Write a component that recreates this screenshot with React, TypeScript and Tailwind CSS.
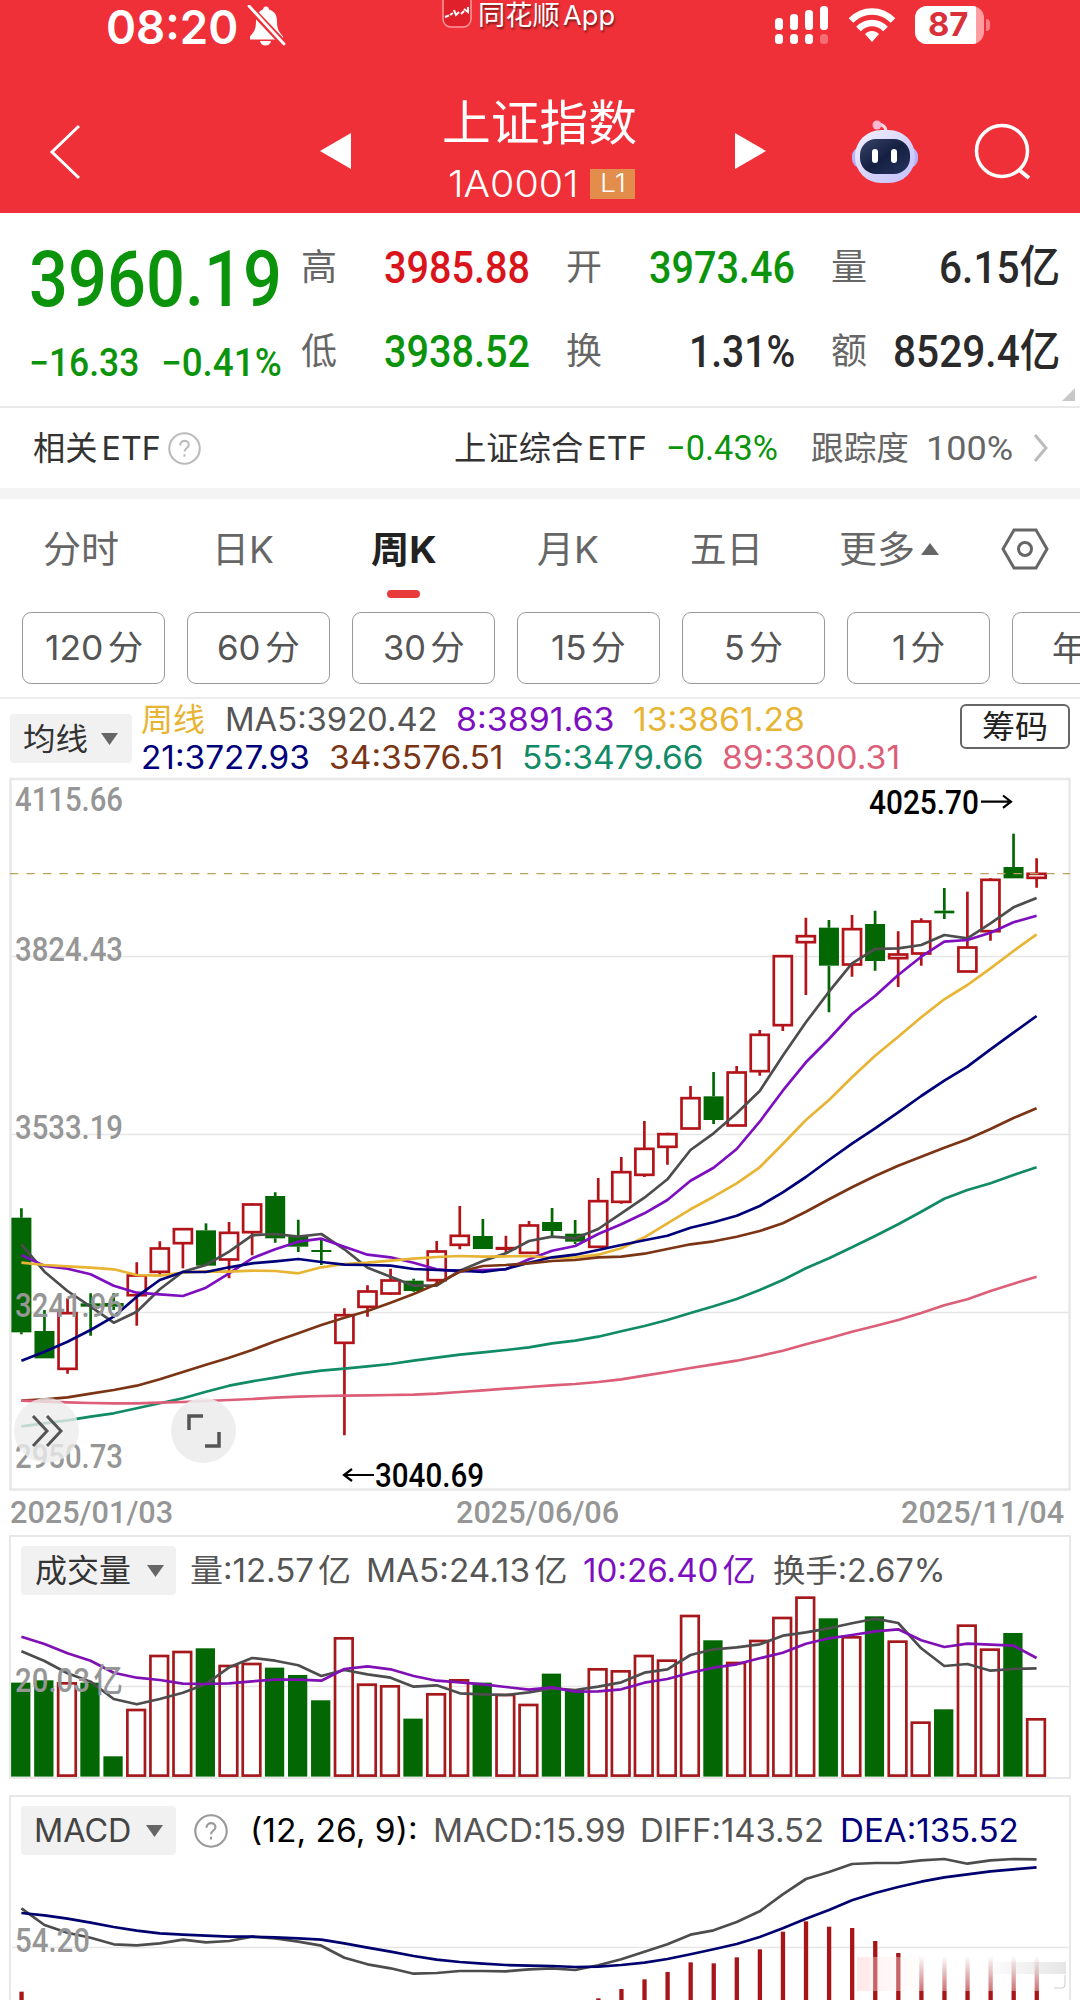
import { useLayoutEffect, useRef, type ReactNode } from 'react';
import clsx from 'clsx';

const STEP = 23.073;
const FIRST_X = 21.4;
const xAt = (i: number) => FIRST_X + i * STEP;

// Chart values are stored in thirds of a pixel
const toPoints = (values: number[]) =>
  values.map((v, i) => `${xAt(i).toFixed(1)},${(v / 3).toFixed(1)}`).join(' ');

type Candle = [up: 0 | 1, top: number, bottom: number, high: number, low: number];

const CANDLES: Candle[] = [
  [0, 1343, 1687, 1315, 1693],
  [0, 1683, 1765, 1620, 1765],
  [1, 1628, 1798, 1585, 1811],
  [0, 1600, 1610, 1570, 1697],
  [0, 1599, 1610, 1570, 1620],
  [1, 1515, 1577, 1477, 1667],
  [1, 1434, 1507, 1414, 1520],
  [1, 1376, 1421, 1376, 1495],
  [0, 1381, 1487, 1360, 1487],
  [1, 1387, 1470, 1356, 1525],
  [1, 1302, 1388, 1300, 1456],
  [0, 1278, 1405, 1267, 1418],
  [0, 1400, 1430, 1349, 1446],
  [0, 1440, 1446, 1405, 1485],
  [1, 1634, 1720, 1615, 1996],
  [1, 1563, 1612, 1546, 1640],
  [1, 1530, 1572, 1496, 1575],
  [0, 1532, 1563, 1526, 1565],
  [1, 1443, 1532, 1413, 1545],
  [1, 1396, 1426, 1308, 1438],
  [0, 1398, 1437, 1347, 1437],
  [1, 1433, 1436, 1397, 1450],
  [1, 1365, 1450, 1353, 1452],
  [0, 1356, 1383, 1314, 1400],
  [0, 1391, 1415, 1350, 1422],
  [1, 1292, 1432, 1224, 1432],
  [1, 1205, 1297, 1161, 1301],
  [1, 1135, 1216, 1053, 1221],
  [1, 1091, 1132, 1088, 1184],
  [1, 983, 1077, 948, 1077],
  [0, 979, 1050, 906, 1062],
  [1, 906, 1068, 888, 1068],
  [1, 793, 905, 780, 917],
  [1, 557, 767, 555, 783],
  [1, 497, 518, 443, 675],
  [0, 473, 587, 450, 727],
  [1, 476, 585, 435, 620],
  [0, 462, 573, 422, 602],
  [1, 552, 566, 484, 651],
  [1, 453, 552, 445, 587],
  [0, 422, 430, 354, 447],
  [1, 531, 606, 365, 606],
  [1, 328, 485, 325, 512],
  [0, 291, 325, 191, 325],
  [1, 310, 325, 265, 353],
];

const MA_LINES = [
  {
    color: '#4d4d4d',
    values: [1423, 1505, 1563, 1610, 1658, 1625, 1558, 1505, 1485, 1445, 1396, 1392, 1400, 1392, 1438, 1493, 1520, 1547, 1547, 1502, 1473, 1450, 1413, 1400, 1405, 1377, 1330, 1283, 1228, 1140, 1090, 1030, 963, 857, 757, 665, 580, 537, 535, 525, 495, 505, 460, 412, 384],
  },
  {
    color: '#7d0fc0',
    values: [1455, 1488, 1496, 1513, 1547, 1568, 1573, 1578, 1553, 1510, 1465, 1438, 1415, 1406, 1430, 1454, 1462, 1478, 1498, 1504, 1500, 1498, 1468, 1442, 1428, 1392, 1363, 1330, 1290, 1232, 1193, 1137, 1055, 962, 877, 807, 732, 678, 615, 560, 515, 510, 488, 457, 437],
  },
  {
    color: '#e8b434',
    values: [1478, 1485, 1489, 1493, 1498, 1515, 1517, 1508, 1504, 1505, 1502, 1503, 1510, 1492, 1482, 1478, 1472, 1466, 1461, 1458, 1460, 1459, 1458, 1464, 1462, 1454, 1435, 1402, 1360, 1318, 1280, 1240, 1192, 1122, 1050, 990, 922, 857, 800, 742, 688, 645, 595, 543, 493],
  },
  {
    color: '#00007a',
    values: [1772, 1745, 1715, 1680, 1640, 1580, 1530, 1506, 1506, 1492, 1480, 1474, 1467, 1476, 1484, 1485, 1487, 1497, 1500, 1502, 1506, 1497, 1478, 1462, 1454, 1440, 1425, 1411, 1397, 1373, 1357, 1337, 1308, 1267, 1221, 1170, 1121, 1075, 1027, 978, 932, 890, 838, 788, 738],
  },
  {
    color: '#7b3414',
    values: [1892, 1888, 1882, 1871, 1860, 1847, 1828, 1806, 1784, 1763, 1740, 1714, 1690, 1665, 1643, 1623, 1598, 1572, 1542, 1505, 1488, 1485, 1480, 1473, 1470, 1462, 1460, 1451, 1437, 1423, 1414, 1400, 1383, 1360, 1325, 1288, 1252, 1218, 1187, 1160, 1133, 1108, 1077, 1044, 1015],
  },
  {
    color: '#118a66',
    values: [1969, 1960, 1951, 1940, 1930, 1915, 1900, 1885, 1865, 1847, 1834, 1823, 1811, 1802, 1796, 1789, 1782, 1772, 1763, 1754, 1747, 1740, 1732, 1720, 1712, 1700, 1684, 1668, 1650, 1629, 1609, 1587, 1560, 1530, 1495, 1465, 1432, 1398, 1363, 1325, 1286, 1260, 1240, 1215, 1192],
  },
  {
    color: '#dd5e78',
    values: [1892, 1895, 1897, 1899, 1900, 1900, 1898, 1896, 1893, 1890, 1887, 1883, 1880, 1878, 1877, 1876, 1875, 1874, 1871, 1866, 1861, 1856, 1851, 1846, 1842, 1836, 1828, 1817, 1806, 1794, 1783, 1772, 1758, 1742, 1723, 1705, 1685, 1668, 1650, 1629, 1606, 1588, 1563, 1541, 1520],
  },
];

const PRICE_LABELS = [
  { text: '4115.66', y: 41 },
  { text: '3824.43', y: 191 },
  { text: '3533.19', y: 369 },
  { text: '3241.96', y: 547 },
  { text: '2950.73', y: 698 },
];

const VOLUMES = [460, 453, 460, 460, 681, 540, 378, 366, 357, 408, 402, 415, 437, 513, 325, 464, 469, 568, 493, 451, 460, 495, 525, 433, 480, 418, 424, 378, 392, 258, 333, 399, 333, 264, 203, 267, 322, 261, 335, 578, 540, 287, 359, 311, 568];
const VOLUME_DOWN = new Set([0, 1, 3, 4, 8, 11, 12, 13, 17, 20, 23, 24, 30, 35, 37, 40, 43]);
const VOLUME_MA5 = [364, 393, 430, 455, 507, 523, 507, 488, 462, 412, 384, 392, 406, 438, 420, 433, 443, 470, 466, 490, 493, 495, 487, 475, 480, 470, 457, 428, 418, 375, 358, 352, 343, 317, 307, 295, 280, 266, 279, 355, 408, 402, 422, 417, 415];
const VOLUME_MA10 = [320, 342, 370, 392, 428, 443, 450, 461, 462, 460, 454, 449, 449, 452, 417, 409, 418, 438, 452, 457, 463, 471, 479, 472, 485, 484, 478, 458, 447, 428, 413, 403, 385, 368, 341, 325, 315, 304, 298, 331, 351, 341, 344, 347, 384];

const DIFF = [382, 432, 455, 470, 490, 493, 487, 476, 484, 480, 467, 472, 482, 494, 530, 550, 562, 578, 576, 570, 570, 571, 565, 562, 567, 553, 535, 512, 490, 461, 448, 423, 391, 340, 294, 273, 249, 246, 246, 238, 234, 248, 238, 234, 235];
const DEA = [396, 403, 413, 425, 438, 449, 457, 461, 464, 467, 467, 469, 472, 476, 487, 500, 512, 525, 536, 543, 548, 552, 554, 555, 558, 557, 552, 545, 534, 520, 505, 489, 468, 442, 413, 387, 358, 336, 318, 302, 289, 280, 271, 265, 259];
const MACD_BARS: Record<number, number> = {
  0: 632, 10: 657, 25: 652, 26: 624, 27: 595, 28: 573, 29: 544, 30: 547, 31: 529, 32: 505, 33: 452, 34: 421, 35: 437, 36: 441, 37: 480, 38: 516,
};

interface FitProps {
  className?: string;
  children: ReactNode;
}

/** Single line of text squeezed or stretched to the width of its box */
function Fit({ className, children }: FitProps) {
  const box = useRef<HTMLSpanElement>(null);
  const inner = useRef<HTMLSpanElement>(null);

  useLayoutEffect(() => {
    if (!box.current || !inner.current) return;
    const scale = box.current.clientWidth / inner.current.offsetWidth;
    inner.current.style.transform = `scaleX(${scale})`;
  }, []);

  return (
    <span className={clsx('flex shrink-0 items-center leading-none', className)}>
      <span ref={box} className="flex w-full">
        <span ref={inner} className="inline-block origin-left whitespace-nowrap">
          {children}
        </span>
      </span>
    </span>
  );
}

function StatusBar() {
  return (
    <div className="flex h-[52px] items-start text-white">
      <Fit className="ml-[106px] mt-[2px] h-12 w-[132px] text-[47px] font-semibold">08:20</Fit>
      <svg className="ml-[9px] mt-[5px]" width="40" height="42" viewBox="0 0 40 42">
        <path d="M19 1.500c2 0 3 1.500 3 3 6 2 8 6 8 12 0 8 2 10 6 15v3H3v-3c4-5 6-7 6-15 0-6 2-10 7-12 0-1.500 1-3 3-3z" fill="#fff" />
        <path d="M13 36h11c-1 6-10 6-11 0z" fill="#fff" />
        <path d="M2 2l36 38" stroke="#ef3038" strokeWidth="7" />
        <path d="M2 1l35 38" stroke="#fff" strokeWidth="2.800" strokeLinecap="round" />
      </svg>
      <div className="ml-[155px] flex w-[173px] items-start gap-[6px]">
        <svg width="30" height="28" viewBox="0 0 30 28">
          <rect x="1" y="-6" width="28" height="33" rx="8" fill="#e0202b" stroke="#ff9a9c" strokeWidth="1.500" />
          <path d="M3 17l4-1.500M8 15l3-2M12 10l2 5 3-3M19 14l3-3M22 9l4 3v-5" stroke="#fff" strokeWidth="2" fill="none" />
        </svg>
        <Fit className="h-[31px] w-[137px] text-[27px] text-shadow-[1px_2px_2px_#00000080] [text-autospace:normal]">同花顺App</Fit>
      </div>
      <svg className="ml-[159px] mt-[6px]" width="54" height="39" viewBox="0 0 54 39">
        {[0, 1, 2, 3].map((i) => (
          <g key={i} fill="#fff">
            <rect x={1 + i * 15} y={12 - i * 4} width="8" height={12 + i * 4} rx="3.500" />
            <rect x={1 + i * 15} y="28" width="8" height="10" rx="3.500" opacity={i === 3 ? 0.3 : 1} />
          </g>
        ))}
      </svg>
      <svg className="ml-[20px] mt-[7px]" width="48" height="36" viewBox="0 0 48 36">
        <g fill="none" stroke="#fff" strokeWidth="6.500">
          <path d="M3 13.500c12-12 30-12 42 0" />
          <path d="M10.500 22c8-8 19-8 27 0" />
        </g>
        <path d="M24 35l-7-8c4-4 10-4 14 0z" fill="#fff" />
      </svg>
      <div className="ml-[19px] mt-[6px] flex h-[38px] items-center">
        <div className="flex h-[38px] w-[69px] overflow-hidden rounded-[12px] bg-[#ff9da0]">
          <div className="flex w-[61px] items-center justify-end bg-white">
            <Fit className="mr-[8px] w-[40px] text-[32px] font-bold text-[#d9303a]">87</Fit>
          </div>
        </div>
        <div className="ml-[2px] h-3 w-1 rounded-r-full bg-[#ff8084]" />
      </div>
    </div>
  );
}

function RobotIcon() {
  return (
    <svg width="70" height="64" viewBox="0 0 70 64">
      <defs>
        <linearGradient id="shell" x1="0" y1="0" x2="1" y2="1">
          <stop offset="0" stopColor="#f4f2ff" />
          <stop offset=".6" stopColor="#d2d0fb" />
          <stop offset="1" stopColor="#c5c2fa" />
        </linearGradient>
        <linearGradient id="visor" x1="0" y1="0" x2="1" y2="1">
          <stop offset="0" stopColor="#3a4468" />
          <stop offset=".5" stopColor="#141f42" />
          <stop offset="1" stopColor="#28345e" />
        </linearGradient>
      </defs>
      <path d="M27 4q9 0 9 8" stroke="#ffd6e6" strokeWidth="3" fill="none" />
      <circle cx="27" cy="5" r="4.500" fill="#ffb8d4" />
      <rect x="2" y="27" width="66" height="21" rx="9" fill="#b5b2fa" />
      <rect x="5" y="10" width="60" height="53" rx="26" fill="url(#shell)" />
      <rect x="10" y="19" width="50" height="35" rx="16" fill="url(#visor)" />
      <rect x="22" y="29" width="6" height="14" rx="3" fill="#fff" />
      <rect x="41" y="29" width="6" height="14" rx="3" fill="#fff" />
    </svg>
  );
}

function Header() {
  return (
    <header className="h-[213px] bg-[#ef3038]">
      <StatusBar />
      <div className="flex h-[161px] items-center text-white">
        <svg className="ml-[49px] mt-[39px]" width="32" height="56" viewBox="0 0 32 56">
          <path d="M30 2L3 28l27 26" stroke="#fff" strokeWidth="3" fill="none" />
        </svg>
        <svg className="ml-[239px] mt-[36px]" width="31" height="36" viewBox="0 0 31 36">
          <path d="M31 0v36L0 18z" fill="#fff" />
        </svg>
        <div className="ml-[91px] flex w-[195px] flex-col items-center">
          <Fit className="mt-[30px] h-[54px] w-[195px] text-[48px]">上证指数</Fit>
          <div className="mt-[18px] flex w-full items-center justify-between pl-[6px] pr-[2px]">
            <Fit className="h-8 w-[131px] text-[37px] font-light">1A0001</Fit>
            <div className="flex h-[30px] w-[45px] items-center justify-center bg-[#e38d4c]">
              <Fit className="w-[26px] text-[25px] font-light">L1</Fit>
            </div>
          </div>
        </div>
        <svg className="ml-[98px] mt-[36px]" width="31" height="36" viewBox="0 0 31 36">
          <path d="M0 0v36l31-18z" fill="#fff" />
        </svg>
        <div className="ml-[84px] mt-[38px]">
          <RobotIcon />
        </div>
        <svg className="ml-[54px] mt-[39px]" width="58" height="58" viewBox="0 0 58 58">
          <circle cx="28" cy="28" r="25.500" fill="none" stroke="#fff" strokeWidth="3.500" />
          <path d="M44 46l11 9" stroke="#fff" strokeWidth="4" />
        </svg>
      </div>
    </header>
  );
}

interface StatProps {
  label: string;
  value: string;
  valueClass: string;
}

function Stat({ label, value, valueClass }: StatProps) {
  return (
    <div className="flex h-[42px] w-[229px] items-center justify-between">
      <span className="text-[36px] leading-none text-[#666]">{label}</span>
      <Fit className={clsx("font-['Roboto','Noto_Sans_CJK_SC',sans-serif] text-[45px] font-medium", valueClass)}>{value}</Fit>
    </div>
  );
}

function Quote() {
  return (
    <section className="relative flex h-[195px] border-b-2 border-[#e9e9e9] pl-[29px]">
      <div className="w-[253px] pt-[34px] font-['Roboto',sans-serif] font-medium text-[#0b940b]">
        <Fit className="h-[66px] w-[253px] text-[77px]">3960.19</Fit>
        <div className="mt-[30px] flex h-10 justify-between">
          <Fit className="w-[110px] text-[38px]">−16.33</Fit>
          <Fit className="w-[121px] text-[38px]">−0.41%</Fit>
        </div>
      </div>
      <div className="ml-[19px] grid grid-cols-3 content-start gap-x-9 gap-y-[42px] pt-[33px]">
        <Stat label="高" value="3985.88" valueClass="w-[146px] text-[#d9141b]" />
        <Stat label="开" value="3973.46" valueClass="w-[146px] text-[#0b940b]" />
        <Stat label="量" value="6.15亿" valueClass="w-[121px] text-[#2a2a2a]" />
        <Stat label="低" value="3938.52" valueClass="w-[146px] text-[#0b940b]" />
        <Stat label="换" value="1.31%" valueClass="w-[106px] text-[#2a2a2a]" />
        <Stat label="额" value="8529.4亿" valueClass="w-[167px] text-[#2a2a2a]" />
      </div>
      <svg className="absolute bottom-[5px] right-[5px]" width="13" height="13" viewBox="0 0 13 13">
        <path d="M13 0v13H0z" fill="#c8c8c8" />
      </svg>
    </section>
  );
}

function HelpIcon({ size, color }: { size: number; color: string }) {
  return (
    <svg width={size} height={size} viewBox="0 0 32 32" fill="none" stroke={color} strokeWidth="2">
      <circle cx="16" cy="16" r="14.800" />
      <path d="M11.800 13c0-6 8.800-5.500 8.400-.500-.2 3-4.200 3.200-4.200 6.500M16 21.500v2.500" />
    </svg>
  );
}

function EtfRow() {
  return (
    <section className="flex h-[91px] items-center border-b-[11px] border-[#f4f4f4] text-[33px] text-[#333] [text-autospace:normal]">
      <Fit className="ml-[33px] w-[128px]">相关ETF</Fit>
      <div className="ml-[7px]">
        <HelpIcon size={33} color="#bbb" />
      </div>
      <Fit className="ml-[253px] w-[193px]">上证综合ETF</Fit>
      <Fit className="ml-[19px] w-[112px] font-['Roboto',sans-serif] text-[35px] text-[#0b940b]">−0.43%</Fit>
      <Fit className="ml-[33px] w-[98px] text-[#666]">跟踪度</Fit>
      <Fit className="ml-[17px] w-[87px] font-['Roboto',sans-serif] text-[34px] text-[#666]">100%</Fit>
      <svg className="ml-[19px]" width="17" height="28" viewBox="0 0 17 28">
        <path d="M3 1l11 13L3 27" stroke="#bbb" strokeWidth="3" fill="none" />
      </svg>
    </section>
  );
}

function PeriodTabs() {
  return (
    <nav className="flex h-[113px] items-center text-[37px] text-[#666]">
      <Fit className="ml-[43px] mb-3 w-[76px]">分时</Fit>
      <Fit className="ml-[93px] mb-3 w-[62px]">日K</Fit>
      <div className="relative ml-[97px] mb-3">
        <Fit className="w-[66px] font-bold text-[#222]">周K</Fit>
        <div className="absolute left-[16px] top-[59px] h-2 w-[33px] rounded-full bg-[#e93b39]" />
      </div>
      <Fit className="ml-[100px] mb-3 w-[62px]">月K</Fit>
      <Fit className="ml-[91px] mb-3 w-[73px]">五日</Fit>
      <Fit className="ml-[76px] mb-3 w-[76px]">更多</Fit>
      <svg className="ml-[6px] mb-[14px]" width="18" height="12" viewBox="0 0 18 12">
        <path d="M9 0l9 12H0z" fill="#666" />
      </svg>
      <svg className="ml-[62px] mb-[13px]" width="48" height="44" viewBox="0 0 48 44" fill="none" stroke="#666" strokeWidth="3">
        <path d="M13 3h22l11 19-11 19H13L2 22z" />
        <circle cx="24" cy="22" r="6.500" />
      </svg>
    </nav>
  );
}

const MINUTES = [
  { label: '120分', width: 'w-[98px]' },
  { label: '60分', width: 'w-[83px]' },
  { label: '30分', width: 'w-[82px]' },
  { label: '15分', width: 'w-[75px]' },
  { label: '5分', width: 'w-[59px]' },
  { label: '1分', width: 'w-[53px]' },
];

function MinuteButtons() {
  return (
    <div className="flex h-[87px] gap-[22px] overflow-hidden border-b-2 border-[#ececec] pl-[22px] text-[34px] text-[#555] [text-autospace:normal]">
      {MINUTES.map((m) => (
        <button key={m.label} className="flex h-[72px] w-[143px] shrink-0 items-center justify-center rounded-[9px] border-[1.500px] border-[#999]">
          <Fit className={m.width}>{m.label}</Fit>
        </button>
      ))}
      <button className="flex h-[72px] w-[143px] shrink-0 items-center rounded-[9px] border-[1.500px] border-[#999] pl-[39px]">
        年
      </button>
    </div>
  );
}

function DownArrow({ className }: { className?: string }) {
  return (
    <svg className={className} width="17" height="12" viewBox="0 0 17 12">
      <path d="M0 0h17l-8.500 12z" fill="#666" />
    </svg>
  );
}

function MaLegend() {
  return (
    <div className="flex h-[79px] text-[32px]">
      <div className="ml-[10px] mt-[15px] flex h-[49px] w-[122px] items-center rounded bg-[#f1f1f1] pl-[13px]">
        <Fit className="w-[65px] text-[31px] text-[#333]">均线</Fit>
        <DownArrow className="ml-[13px]" />
      </div>
      <div className="ml-[9px] mt-[2px] w-[800px]">
        <div className="flex h-[37px] items-center">
          <Fit className="w-[64px] text-[#e8b434]">周线</Fit>
          <Fit className="ml-[20px] w-[213px] text-[#555]">MA5:3920.42</Fit>
          <Fit className="ml-[18px] w-[158px] text-[#7d0fc0]">8:3891.63</Fit>
          <Fit className="ml-[19px] w-[172px] text-[#e8b434]">13:3861.28</Fit>
        </div>
        <div className="flex h-10 items-center">
          <Fit className="w-[169px] text-[#00007a]">21:3727.93</Fit>
          <Fit className="ml-[19px] w-[174px] text-[#7b3414]">34:3576.51</Fit>
          <Fit className="ml-[19px] w-[181px] text-[#118a66]">55:3479.66</Fit>
          <Fit className="ml-[19px] w-[178px] text-[#dd5e78]">89:3300.31</Fit>
        </div>
      </div>
      <div className="ml-[19px] mt-[5px] flex h-[45px] w-[110px] items-center justify-center rounded-[6px] border-2 border-[#666]">
        <Fit className="w-[66px] text-[32px] text-[#222]">筹码</Fit>
      </div>
    </div>
  );
}

function AxisText({ x, y, width, children }: { x: number; y: number; width: number; children: string }) {
  return (
    <text x={x} y={y} textLength={width} lengthAdjust="spacingAndGlyphs" fill="#969696" className="font-['Roboto','Noto_Sans_CJK_SC',sans-serif] text-[33px] font-medium">
      {children}
    </text>
  );
}

function Line({ values, color }: { values: number[]; color: string }) {
  return <polyline points={toPoints(values)} fill="none" stroke={color} strokeWidth="2.700" strokeLinejoin="round" />;
}

function CandleShape({ candle, x }: { candle: Candle; x: number }) {
  const [up, top, bottom, high, low] = candle.map((v, i) => (i === 0 ? v : v / 3));
  const color = up ? '#b3141a' : '#036803';
  return (
    <g stroke={color} strokeWidth="2.700">
      <path d={`M${x} ${high}V${top}M${x} ${bottom}V${low}`} />
      {up ? (
        <rect x={x - 9} y={top + 0.5} width="18" height={Math.max(bottom - top - 1, 0.5)} fill="none" />
      ) : (
        <rect x={x - 10} y={top} width="20" height={bottom - top} fill={color} stroke="none" />
      )}
    </g>
  );
}

function PriceChart() {
  return (
    <div className="relative h-[712px]">
      <svg width="1080" height="712" viewBox="0 8 1080 712" className="block overflow-visible">
        <rect x="10.500" y="9" width="1059" height="710.500" fill="none" stroke="#e8e8e8" strokeWidth="2.500" />
        {[186.5, 364.5, 542.5].map((y) => (
          <path key={y} d={`M12 ${y}H1069`} stroke="#e6e6e6" strokeWidth="1.300" />
        ))}
        {CANDLES.map((c, i) => (
          <CandleShape key={i} candle={c} x={xAt(i)} />
        ))}
        {MA_LINES.map((l) => (
          <Line key={l.color} values={l.values} color={l.color} />
        ))}
        <path d="M10 103.600H1070" stroke="#b9a260" strokeWidth="1.400" strokeDasharray="8.400 8.050" />
        {PRICE_LABELS.map((l) => (
          <AxisText key={l.text} x={15} y={l.y} width={108}>
            {l.text}
          </AxisText>
        ))}
        <g className="font-['Roboto',sans-serif] text-[33px] font-medium">
          <text x="869" y="43.500" textLength="110" lengthAdjust="spacingAndGlyphs">4025.70</text>
          <text x="375" y="717" textLength="109" lengthAdjust="spacingAndGlyphs">3040.69</text>
        </g>
        <g fill="none" stroke="#000" strokeWidth="2.200">
          <path d="M981 31.700h29M1003 25.500l8 6.200-8 6.200" />
          <path d="M374 705h-29M352 699l-8 6 8 6" />
        </g>
      </svg>
      <div className="absolute left-[14px] top-[620px] flex size-[65px] items-center justify-center rounded-full bg-[#ececec]/80">
        <svg width="32" height="34" viewBox="0 0 32 34" fill="none" stroke="#555" strokeWidth="3">
          <path d="M2 2l14 15L2 32M16 2l14 15-14 15" />
        </svg>
      </div>
      <div className="absolute left-[171px] top-[620px] flex size-[65px] items-center justify-center rounded-full bg-[#ececec]/90">
        <svg width="34" height="34" viewBox="0 0 34 34" fill="none" stroke="#555" strokeWidth="3.500">
          <path d="M2 16V2h14M32 18v14H18" />
        </svg>
      </div>
    </div>
  );
}

function DateAxis() {
  return (
    <div className="flex h-[45px] items-center justify-between pl-[10px] pr-[16px] font-['Roboto',sans-serif] text-[31px] font-medium text-[#969696]">
      <Fit className="w-[163px]">2025/01/03</Fit>
      <Fit className="w-[163px]">2025/06/06</Fit>
      <Fit className="w-[163px]">2025/11/04</Fit>
    </div>
  );
}

function VolumePanel() {
  return (
    <section className="ml-[9px] h-[244px] w-[1062px] border-[2.500px] border-[#e8e8e8] text-[32px] text-[#555] [text-autospace:normal]">
      <div className="mt-[9px] flex h-[49px] items-center">
        <div className="ml-[10px] flex h-[49px] w-[155px] items-center rounded bg-[#f1f1f1] pl-[14px]">
          <Fit className="w-[96px] text-[32px] text-[#333]">成交量</Fit>
          <DownArrow className="ml-[16px]" />
        </div>
        <Fit className="ml-[14px] w-[161px]">量:12.57亿</Fit>
        <Fit className="ml-[15px] w-[202px]">MA5:24.13亿</Fit>
        <Fit className="ml-[15px] w-[173px] text-[#7d0fc0]">10:26.40亿</Fit>
        <Fit className="ml-[17px] w-[173px]">换手:2.67%</Fit>
      </div>
      <svg width="1080" height="183" viewBox="0 65 1080 183" className="-ml-[11px] block">
        <path d="M12 156.500H1069" stroke="#e6e6e6" strokeWidth="1.300" />
        {VOLUMES.map((v, i) => {
          const down = VOLUME_DOWN.has(i);
          return down ? (
            <rect key={i} x={xAt(i) - 10.3} y={v / 3 - 0.7} width="19.300" height={247.3 - v / 3} fill="#036803" />
          ) : (
            <rect key={i} x={xAt(i) - 9.4} y={v / 3} width="17.600" height={245.6 - v / 3} fill="none" stroke="#a5191c" strokeWidth="2.700" />
          );
        })}
        <Line values={VOLUME_MA5} color="#4d4d4d" />
        <Line values={VOLUME_MA10} color="#8010b4" />
        <AxisText x={15} y={161.500} width={108}>20.03亿</AxisText>
      </svg>
    </section>
  );
}

function MacdPanel() {
  return (
    <section className="ml-[9px] mt-[16px] h-[206px] w-[1062px] overflow-hidden border-[2.500px] border-b-0 border-[#e8e8e8] text-[32px] text-[#555]">
      <div className="mt-[9px] flex h-[49px] items-center">
        <div className="ml-[10px] flex h-[49px] w-[155px] items-center rounded bg-[#f1f1f1] pl-[13px]">
          <Fit className="w-[97px] text-[32px] text-[#444]">MACD</Fit>
          <DownArrow className="ml-[15px]" />
        </div>
        <div className="ml-[18px]">
          <HelpIcon size={34} color="#999" />
        </div>
        <Fit className="ml-[22px] w-[168px] text-black">(12, 26, 9):</Fit>
        <Fit className="ml-[15px] w-[193px]">MACD:15.99</Fit>
        <Fit className="ml-[14px] w-[184px]">DIFF:143.52</Fit>
        <Fit className="ml-[16px] w-[179px] text-[#00007a]">DEA:135.52</Fit>
      </div>
      <svg width="1080" height="146" viewBox="0 74 1080 146" className="-ml-[11px] block">
        <defs>
          <linearGradient id="fade" x1="0" y1="0" x2="0" y2="1">
            <stop offset="0" stopColor="#a81518" stopOpacity="0" />
            <stop offset="1" stopColor="#a81518" stopOpacity=".6" />
          </linearGradient>
          <linearGradient id="smear" x1="0" y1="0" x2="1" y2="0">
            <stop offset="0" stopColor="#ccc" stopOpacity="0" />
            <stop offset="1" stopColor="#ccc" />
          </linearGradient>
          <linearGradient id="blush" x1="0" y1="0" x2="1" y2="0">
            <stop offset="0" stopColor="#ffdede" stopOpacity=".7" />
            <stop offset="1" stopColor="#ffdede" stopOpacity="0" />
          </linearGradient>
        </defs>
        <path d="M12 166.500H1069" stroke="#e6e6e6" strokeWidth="1.300" />
        <rect x="857" y="176" width="70" height="34" fill="url(#blush)" />
        {Object.entries(MACD_BARS).map(([i, v]) => (
          <rect key={i} x={xAt(Number(i)) - 2} y={v / 3} width="4.300" height={220 - v / 3} fill="#a81518" />
        ))}
        <rect x="870" y="176" width="55" height="34" fill="#fff" opacity=".35" />
        {[39, 40, 41, 42, 43, 44].map((i) => (
          <g key={i}>
            <rect x={xAt(i) - 2} y="175" width="4.300" height="35" fill="url(#fade)" />
            <rect x={xAt(i) - 2} y="210" width="4.300" height="10" fill="#a81518" />
          </g>
        ))}
        <rect x="980" y="181" width="86" height="12" fill="url(#smear)" opacity=".5" />
        <path d="M1054 207H1062Q1065 207 1065 204V194" stroke="#ccc" fill="none" />
        <Line values={DIFF} color="#4d4d4d" />
        <Line values={DEA} color="#00006e" />
        <AxisText x={15} y={171} width={75}>54.20</AxisText>
      </svg>
    </section>
  );
}

export default function App() {
  return (
    <main className="h-[2000px] w-[1080px] overflow-hidden bg-white font-['Inter','Noto_Sans_CJK_SC',sans-serif]">
      <Header />
      <Quote />
      <EtfRow />
      <PeriodTabs />
      <MinuteButtons />
      <MaLegend />
      <PriceChart />
      <DateAxis />
      <VolumePanel />
      <MacdPanel />
    </main>
  );
}
